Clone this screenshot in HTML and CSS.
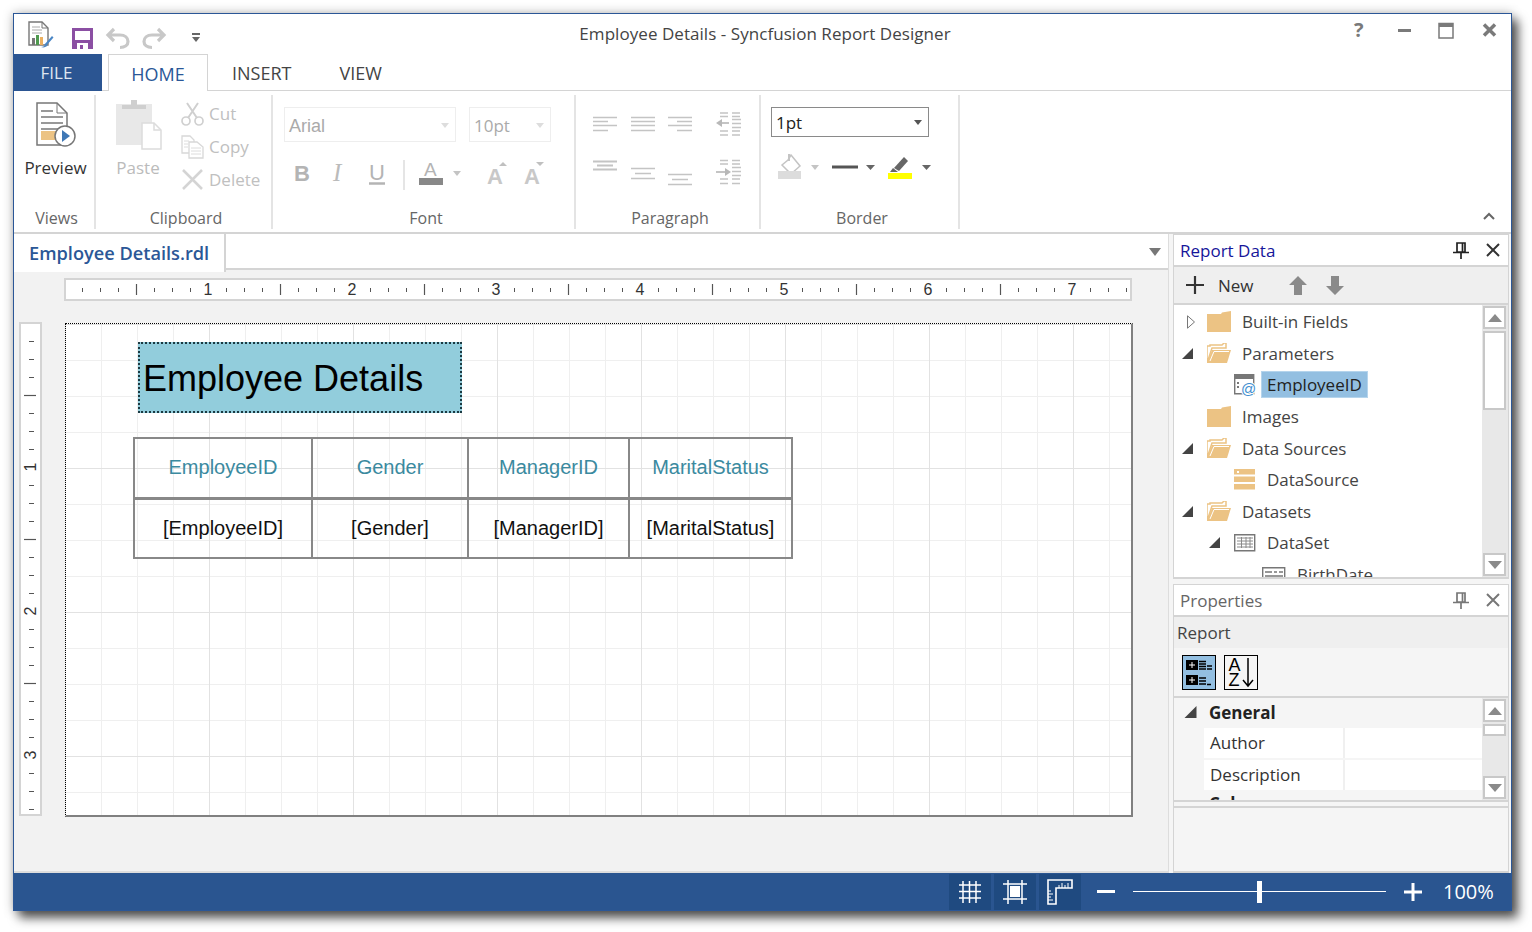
FILE: index.html

```html
<!DOCTYPE html>
<html lang="en">
<head>
  <meta charset="UTF-8">
  <title>Employee Details - Syncfusion Report Designer</title>
  <link rel="stylesheet" href="styles.css">
</head>
<body>

  <svg class="defs" width="0" height="0">
    <defs>
      <symbol id="folder" viewBox="0 0 24 21">
        <path d="M0 3h14l1-1.500 9-1.500V21H0z" fill="#ecc384"/>
      </symbol>
      <symbol id="folder-open" viewBox="0 0 24 20">
        <path d="M0 20V3h3V2h12l2-2h2v5H5z" fill="#fff" stroke="#ecc384" stroke-width="1.500"/>
        <path d="M0 20 5 7h19l-4 13z" fill="#ecc384"/>
        <path d="M3 18 7 8.500h15" fill="none" stroke="#fff"/>
      </symbol>
      <symbol id="twist-open" viewBox="0 0 11 11">
        <path d="M11 0v11H0z" fill="#444"/>
      </symbol>
      <symbol id="twist-closed" viewBox="0 0 8 14">
        <path d="M.5.800 7.500 7 .5 13.200z" fill="#fff" stroke="#777"/>
      </symbol>
      <symbol id="pin" viewBox="0 0 16 18">
        <path d="M4 2h8v9H4zM9.500 2v9M0 11.500h16M8 12v6" fill="none" stroke="currentColor" stroke-width="1.700"/>
      </symbol>
      <symbol id="close" viewBox="0 0 14 14">
        <path d="M1 1 13 13M13 1 1 13" fill="none" stroke="currentColor" stroke-width="2"/>
      </symbol>
      <symbol id="arrow-up" viewBox="0 0 16 10">
        <path d="M8 1 15 9H1z" fill="#8a8a8a"/>
      </symbol>
      <symbol id="arrow-down" viewBox="0 0 16 10">
        <path d="M8 9 15 1H1z" fill="#8a8a8a"/>
      </symbol>
    </defs>
  </svg>

  <div class="window">

    <div class="titlebar">
      <svg class="qat" width="190" height="40" viewBox="0 0 190 40">
        <!-- report icon -->
        <path d="M15 8h13l6 6v17H15z" fill="#fff" stroke="#777" stroke-width="1.400"/>
        <path d="M28 8v6h6" fill="none" stroke="#777"/>
        <path d="M18 13h8M18 16h10M18 19h10" stroke="#aaa"/>
        <path d="M18 24h3v7h-3z" fill="#777"/>
        <path d="M22 21h3v10h-3z" fill="#4f9a4f"/>
        <path d="M26 23h3v8h-3z" fill="#ecb060"/>
        <path d="M30 31 38 22l1.500 1.500-7 8z" fill="#4a86c5"/>
        <path d="M27 33c2 0 4-1 5-3l1.500 1.500c-1 1.500-4 2.500-6.500 1.500z" fill="#4a86c5"/>
        <!-- save -->
        <path d="M58 14h21v21H58z" fill="#8b4fa3"/>
        <path d="M61 17h15v9H61z" fill="#fff"/>
        <path d="M63 29h11v6H63z" fill="#fff"/>
        <path d="M66 31h3v4h-3z" fill="#8b4fa3"/>
        <!-- undo, redo -->
        <path d="M100 15l-6 6 6 6M95 21h11c5 0 8 3 8 6.500s-3 6-8 6" fill="none" stroke="#c8c8c8" stroke-width="3.200"/>
        <path d="M144 15l6 6-6 6M149 21h-11c-5 0-8 3-8 6.500s3 6 8 6" fill="none" stroke="#c8c8c8" stroke-width="3.200"/>
        <!-- customize -->
        <path d="M178 19h8v2h-8z" fill="#666"/>
        <path d="M178 23h8l-4 5z" fill="#666"/>
      </svg>
      <div class="title-text">Employee Details - Syncfusion Report Designer</div>
      <div class="window-controls">
        <span class="win-help">?</span>
        <svg width="150" height="40" viewBox="0 0 150 40">
          <path d="M50 16.500h13" stroke="#7a7a7a" stroke-width="3"/>
          <path d="M91 9.500h14v14.500H91z" fill="#fff" stroke="#7a7a7a" stroke-width="1.500"/>
          <path d="M91 9.500h14v3.500H91z" fill="#7a7a7a"/>
          <path d="M136 10.500l11 11M147 10.500l-11 11" stroke="#7a7a7a" stroke-width="3.500"/>
        </svg>
      </div>
    </div>

    <div class="tabs">
      <div class="tab-file">FILE</div>
      <div class="tab tab-active">HOME</div>
      <div class="tab tab-insert">INSERT</div>
      <div class="tab tab-view">VIEW</div>
    </div>

    <div class="ribbon">

      <div class="group group-views">
        <div class="group-body preview-btn">
          <svg width="40" height="45" viewBox="0 0 40 45">
            <path d="M1 1h20l10 10v32H1z" fill="#fff" stroke="#777" stroke-width="1.500"/>
            <path d="M21 1v10h10" fill="none" stroke="#777"/>
            <path d="M5 9h12M5 15h22M5 21h22M5 27h22" stroke="#999" stroke-width="2"/>
            <path d="M5 29h22v9H5z" fill="#ecc384"/>
            <circle cx="29" cy="34" r="10" fill="#fff" stroke="#777" stroke-width="1.500"/>
            <path d="M26 28l8 6-8 6z" fill="#3f78b5"/>
          </svg>
          <span class="big-label">Preview</span>
        </div>
        <div class="group-label">Views</div>
      </div>

      <div class="group group-clipboard">
        <div class="group-body clipboard-body">
          <div class="paste-btn">
            <svg width="46" height="50" viewBox="0 0 46 50">
              <path d="M0 4h36v41H0z" fill="#e8e8e8"/>
              <path d="M6 5h24v4H6zM15 0h6v5h-6z" fill="#cfcfcf"/>
              <path d="M26 23h12l7 7v19H26z" fill="#fff" stroke="#dcdcdc" stroke-width="1.500"/>
              <path d="M38 23v7h7" fill="none" stroke="#dcdcdc" stroke-width="1.500"/>
            </svg>
            <span class="big-label disabled">Paste</span>
          </div>
          <div class="clip-list">
            <div class="clip-row">
              <svg width="23" height="24" viewBox="0 0 23 24">
                <circle cx="5" cy="19" r="4" fill="none" stroke="#d0d0d0" stroke-width="1.700"/>
                <circle cx="18" cy="19" r="4" fill="none" stroke="#d0d0d0" stroke-width="1.700"/>
                <path d="M7 16 17 1M16 16 6 1" stroke="#d0d0d0" stroke-width="2"/>
              </svg>
              <span>Cut</span>
            </div>
            <div class="clip-row">
              <svg width="23" height="24" viewBox="0 0 23 24">
                <path d="M1 1h8l4 4v13H1z" fill="#fff" stroke="#d8d8d8" stroke-width="1.300"/>
                <path d="M8 7h8l6 5v11H8z" fill="#fff" stroke="#d8d8d8" stroke-width="1.300"/>
                <path d="M3 6h5M3 9h4M3 12h4M10 13h10M10 16h10M10 19h10" stroke="#dcdcdc"/>
              </svg>
              <span>Copy</span>
            </div>
            <div class="clip-row">
              <svg width="23" height="22" viewBox="0 0 23 22">
                <path d="M2 1 21 20M21 1 2 20" stroke="#d4d4d4" stroke-width="2.500"/>
              </svg>
              <span>Delete</span>
            </div>
          </div>
        </div>
        <div class="group-label">Clipboard</div>
      </div>

      <div class="group group-font">
        <div class="group-body">
          <div class="font-selects">
            <div class="select select-disabled select-family"><span class="arial">Arial</span><i class="caret caret-light"></i></div>
            <div class="select select-disabled select-size"><span>10pt</span><i class="caret caret-light"></i></div>
          </div>
          <svg class="font-tools" width="265" height="36" viewBox="284 155 265 36">
            <text class="ico-letter" x="294" y="181" font-weight="bold" fill="#b4b4b4">B</text>
            <text class="ico-letter ico-italic" x="333" y="181" fill="#bbb">I</text>
            <text class="ico-letter" x="369" y="180" fill="#b4b4b4">U</text>
            <path d="M369 183.500h16" stroke="#b4b4b4" stroke-width="2.500"/>
            <path d="M404 160v30" stroke="#dcdcdc" stroke-width="1.500"/>
            <text class="ico-letter ico-small" x="424" y="176" fill="#b4b4b4">A</text>
            <path d="M419 178h24v7h-24z" fill="#888"/>
            <path d="M453 171h8l-4 5z" fill="#c4c4c4"/>
            <text class="ico-letter" x="487" y="184" font-weight="bold" fill="#c8c8c8">A</text>
            <path d="M499 166l4-4 4 4z" fill="#c0c0c0"/>
            <text class="ico-letter" x="524" y="184" font-weight="bold" fill="#c8c8c8">A</text>
            <path d="M536 162h8l-4 4z" fill="#c0c0c0"/>
          </svg>
        </div>
        <div class="group-label">Font</div>
      </div>

      <div class="group group-paragraph">
        <div class="group-body">
          <svg width="184" height="112" viewBox="576 95 184 112">
            <g stroke="#c4c4c4" stroke-width="1.500" fill="none">
              <path d="M593 117.500h24M593 121.500h15M593 125.500h24M593 130.500h15"/>
              <path d="M631 117.500h24M631 121.500h24M631 125.500h24M631 130.500h24"/>
              <path d="M668 117.500h24M677 121.500h15M668 125.500h24M677 130.500h15"/>
              <path d="M593 161.500h24M597 165.500h16M593 169.500h24" stroke-width="2"/>
              <path d="M631 168.500h24M635 173.500h16M631 178.500h24"/>
              <path d="M668 174.500h24M672 179.500h16M668 184.500h24"/>
              <path d="M720 113h21M720 116.500h21M720 131h21M720 135h21" stroke-dasharray="8 4"/>
              <path d="M732 119.500h9M732 123.500h9M732 127.500h9"/>
              <path d="M720 160.500h21M720 164h21M720 179h21M720 183.500h21" stroke-dasharray="8 4"/>
              <path d="M732 167.500h9M732 171.500h9M732 175.500h9"/>
              <path d="M719 123h10M716 172h9" stroke-width="2"/>
            </g>
            <path d="M716 123l6-4v8zM731 172l-6-4v8z" fill="#b8b8b8"/>
          </svg>
        </div>
        <div class="group-label">Paragraph</div>
      </div>

      <div class="group group-border">
        <div class="group-body">
          <div class="select select-weight"><span>1pt</span><i class="caret"></i></div>
          <svg class="border-tools" width="170" height="30" viewBox="771 153 170 30">
            <path d="M791 155l9 11-9 8-9-9 6-5z" fill="#fff" stroke="#c4c4c4" stroke-width="1.500"/>
            <path d="M789 154v7" stroke="#c4c4c4" stroke-width="2"/>
            <path d="M778 171h23v8h-23z" fill="#dcdcdc"/>
            <path d="M811 165h8l-4 5z" fill="#c4c4c4"/>
            <path d="M832 165.500h26v3h-26z" fill="#555"/>
            <path d="M866 165h9l-4.500 5z" fill="#666"/>
            <path d="M894 168l10-11 4 4-9 10z" fill="#666"/>
            <path d="M890 172l3-4 5 4z" fill="#666"/>
            <path d="M888 173h24v6h-24z" fill="#ffff00"/>
            <path d="M922 165h9l-4.500 5z" fill="#666"/>
          </svg>
        </div>
        <div class="group-label">Border</div>
      </div>

      <svg class="ribbon-collapse" width="12" height="8" viewBox="0 0 12 8">
        <path d="M1 7l5-5 5 5" fill="none" stroke="#666" stroke-width="2"/>
      </svg>
    </div>

    <div class="main">

      <div class="designer">
        <div class="doc-tabs">
          <div class="doc-tab">Employee Details.rdl</div>
          <div class="doc-rest">
            <svg width="12" height="8" viewBox="0 0 12 8"><path d="M0 0h12L6 8z" fill="#777"/></svg>
          </div>
        </div>

        <svg class="ruler-h" width="1068" height="23" viewBox="64 278 1068 23">
          <defs>
            <pattern id="htick" x="64" y="278" width="144" height="23" patternUnits="userSpaceOnUse">
              <path d="M18.500 10v4M36.500 10v4M54.500 10v4M90.500 10v4M108.500 10v4M126.500 10v4" stroke="#555"/>
              <path d="M72.500 6v11" stroke="#555" stroke-width="1.200"/>
            </pattern>
          </defs>
          <rect x="65" y="279" width="1066" height="21" fill="#fff" stroke="#d4d4d4" stroke-width="2"/>
          <rect x="66" y="280" width="1064" height="19" fill="url(#htick)"/>
          <g class="ruler-num" text-anchor="middle">
            <text x="208" y="295">1</text>
            <text x="352" y="295">2</text>
            <text x="496" y="295">3</text>
            <text x="640" y="295">4</text>
            <text x="784" y="295">5</text>
            <text x="928" y="295">6</text>
            <text x="1072" y="295">7</text>
          </g>
        </svg>

        <div class="work">
          <svg class="ruler-v" width="23" height="494" viewBox="19 322 23 494">
            <defs>
              <pattern id="vtick" x="19" y="323" width="23" height="144" patternUnits="userSpaceOnUse">
                <path d="M10 18.500h5M10 36.500h5M10 54.500h5M10 90.500h5M10 108.500h5M10 126.500h5" stroke="#555"/>
                <path d="M5 72.500h12" stroke="#555" stroke-width="1.200"/>
              </pattern>
            </defs>
            <rect x="20" y="323" width="21" height="492" fill="#fff" stroke="#d4d4d4" stroke-width="2"/>
            <rect x="21" y="324" width="19" height="490" fill="url(#vtick)"/>
            <g class="ruler-num" text-anchor="middle">
              <text transform="translate(36 467) rotate(-90)">1</text>
              <text transform="translate(36 611) rotate(-90)">2</text>
              <text transform="translate(36 755) rotate(-90)">3</text>
            </g>
          </svg>

          <div class="canvas">
            <div class="report-title">Employee Details</div>
            <table class="report-table">
              <colgroup>
                <col class="col-a"><col class="col-b"><col class="col-c"><col class="col-d">
              </colgroup>
              <tr>
                <th>EmployeeID</th><th>Gender</th><th>ManagerID</th><th>MaritalStatus</th>
              </tr>
              <tr>
                <td>[EmployeeID]</td><td>[Gender]</td><td>[ManagerID]</td><td>[MaritalStatus]</td>
              </tr>
            </table>
          </div>
        </div>
      </div>

      <div class="side">

        <div class="panel panel-data">
          <div class="panel-head">
            <span class="panel-title panel-title-active">Report Data</span>
            <svg class="pin" width="16" height="18"><use href="#pin"/></svg>
            <svg class="close" width="14" height="14"><use href="#close"/></svg>
          </div>
          <div class="data-toolbar">
            <svg width="18" height="18" viewBox="0 0 18 18"><path d="M9 0v18M0 9h18" stroke="#333" stroke-width="2.200"/></svg>
            <span class="new-label">New</span>
            <svg class="tool-up" width="18" height="19" viewBox="0 0 18 19"><path d="M9 0l9 9h-5v10H5V9H0z" fill="#8a8a8a"/></svg>
            <svg class="tool-down" width="18" height="19" viewBox="0 0 18 19"><path d="M9 19 0 10h5V0h8v10h5z" fill="#8a8a8a"/></svg>
          </div>
          <div class="tree-wrap">
            <div class="tree">
              <div class="tree-row lvl0">
                <span class="twist"><svg class="tw-closed" width="8" height="14"><use href="#twist-closed"/></svg></span>
                <svg class="tree-icon" width="24" height="21"><use href="#folder"/></svg>
                <span class="tree-label">Built-in Fields</span>
              </div>
              <div class="tree-row lvl0">
                <span class="twist"><svg width="11" height="11"><use href="#twist-open"/></svg></span>
                <svg class="tree-icon" width="24" height="20"><use href="#folder-open"/></svg>
                <span class="tree-label">Parameters</span>
              </div>
              <div class="tree-row lvl1">
                <span class="twist"></span>
                <svg class="tree-icon" width="22" height="22" viewBox="0 0 22 22">
                  <path d="M.7.700h19v19H.7z" fill="#fff" stroke="#777" stroke-width="1.400"/>
                  <path d="M0 0h20v5H0z" fill="#777"/>
                  <path d="M3 8h2v2H3zM3 12h2v2H3z" fill="#777"/>
                  <text class="param-at" x="7" y="20">@</text>
                </svg>
                <span class="tree-label tree-selected">EmployeeID</span>
              </div>
              <div class="tree-row lvl0">
                <span class="twist"></span>
                <svg class="tree-icon" width="24" height="21"><use href="#folder"/></svg>
                <span class="tree-label">Images</span>
              </div>
              <div class="tree-row lvl0">
                <span class="twist"><svg width="11" height="11"><use href="#twist-open"/></svg></span>
                <svg class="tree-icon" width="24" height="20"><use href="#folder-open"/></svg>
                <span class="tree-label">Data Sources</span>
              </div>
              <div class="tree-row lvl1">
                <span class="twist"></span>
                <svg class="tree-icon" width="22" height="21" viewBox="0 0 22 21">
                  <path d="M0 0h21v5.500H0zM0 7.500h21v5.500H0zM0 15h21v5.500H0z" fill="#ecc384"/>
                  <path d="M3 2h2v2H3z" fill="#fff"/>
                </svg>
                <span class="tree-label">DataSource</span>
              </div>
              <div class="tree-row lvl0">
                <span class="twist"><svg width="11" height="11"><use href="#twist-open"/></svg></span>
                <svg class="tree-icon" width="24" height="20"><use href="#folder-open"/></svg>
                <span class="tree-label">Datasets</span>
              </div>
              <div class="tree-row lvl1">
                <span class="twist"><svg width="11" height="11"><use href="#twist-open"/></svg></span>
                <svg class="tree-icon" width="22" height="18" viewBox="0 0 22 18">
                  <path d="M.7.700h20v16h-20z" fill="#fff" stroke="#777" stroke-width="1.400"/>
                  <path d="M3 4h16M3 7h16M3 10h16M3 13h16M7.500 3v11M12 3v11M16 3v11" stroke="#8a8a8a"/>
                </svg>
                <span class="tree-label">DataSet</span>
              </div>
              <div class="tree-row lvl2">
                <span class="twist"></span>
                <svg class="tree-icon" width="24" height="16" viewBox="0 0 24 16">
                  <path d="M.7.700h22v14h-22z" fill="#fff" stroke="#777" stroke-width="1.400"/>
                  <path d="M3 5h7M12 5h3M17 5h4M3 9h18" stroke="#777" stroke-width="1.500"/>
                </svg>
                <span class="tree-label">BirthDate</span>
              </div>
            </div>
            <div class="scrollbar">
              <div class="sb-btn"><svg width="16" height="10"><use href="#arrow-up"/></svg></div>
              <div class="sb-thumb sb-thumb-tree"></div>
              <div class="sb-space"></div>
              <div class="sb-btn"><svg width="16" height="10"><use href="#arrow-down"/></svg></div>
            </div>
          </div>
        </div>

        <div class="panel panel-props">
          <div class="panel-head">
            <span class="panel-title">Properties</span>
            <svg class="pin pin-muted" width="16" height="18"><use href="#pin"/></svg>
            <svg class="close close-muted" width="14" height="14"><use href="#close"/></svg>
          </div>
          <div class="props-object">Report</div>
          <div class="props-sort">
            <div class="sort-btn sort-on">
              <svg width="26" height="28" viewBox="0 0 26 28">
                <path d="M0 1h12v10H0zM0 16h12v10H0z" fill="#000"/>
                <path d="M3 6h6M6 3v6M3 21h6M6 18v6" stroke="#fff"/>
                <path d="M13 2.500h7M13 5h7M13 7.500h7M13 10h7M21 7h5M21 10h5M13 19h7M13 22h7M13 25h7M21 25.500h4" stroke="#000" stroke-width="1.500"/>
              </svg>
            </div>
            <div class="sort-btn">
              <span class="az">A<br>Z</span>
              <svg width="12" height="30" viewBox="0 0 12 30"><path d="M6 0v28M1 22l5 6 5-6" fill="none" stroke="#000" stroke-width="1.500"/></svg>
            </div>
          </div>
          <div class="props-wrap">
            <div class="props-list">
              <div class="prop-cat">
                <svg width="13" height="12" viewBox="0 0 11 11"><path d="M11 0v11H0z" fill="#444"/></svg>
                <span>General</span>
              </div>
              <div class="prop-row"><span class="prop-name">Author</span><span class="prop-value"></span></div>
              <div class="prop-row"><span class="prop-name">Description</span><span class="prop-value"></span></div>
              <div class="prop-cat prop-cat-cut"><span>Colors</span></div>
            </div>
            <div class="scrollbar scrollbar-props">
              <div class="sb-btn"><svg width="16" height="10"><use href="#arrow-up"/></svg></div>
              <div class="sb-thumb sb-thumb-props"></div>
              <div class="sb-space"></div>
              <div class="sb-btn"><svg width="16" height="10"><use href="#arrow-down"/></svg></div>
            </div>
          </div>
          <div class="props-desc"></div>
        </div>
      </div>
    </div>

    <div class="statusbar">
      <div class="status-btn">
        <svg width="24" height="24" viewBox="0 0 24 24">
          <path d="M5 1v22M11.500 1v22M18 1v22M1 5h22M1 11.500h22M1 18h22" stroke="#fff" stroke-width="1.500"/>
        </svg>
      </div>
      <div class="status-btn">
        <svg width="24" height="26" viewBox="0 0 24 26">
          <path d="M5 1v24M19 1v24M0 5h24M0 20h24" stroke="#fff" stroke-width="1.500"/>
          <path d="M7 7h10v11H7z" fill="#fff"/>
        </svg>
      </div>
      <div class="status-btn">
        <svg width="26" height="26" viewBox="0 0 26 26">
          <path d="M1 1h24v8H9v16H1z" fill="none" stroke="#fff" stroke-width="1.600"/>
          <path d="M12 9V6M15 9V4M18 9V6M21 9V4M1 12h3M1 15h5M1 18h3M1 21h5" stroke="#fff"/>
        </svg>
      </div>
      <div class="zoom-minus"></div>
      <div class="zoom-track"><div class="zoom-thumb"></div></div>
      <svg class="zoom-plus" width="18" height="18" viewBox="0 0 18 18"><path d="M9 0v18M0 9h18" stroke="#fff" stroke-width="3"/></svg>
      <div class="zoom-value">100%</div>
    </div>

  </div>

</body>
</html>
```

FILE: styles.css

```css
* {
  box-sizing: border-box;
}
html, body {
  height: 932px;
}
body {
  margin: 0;
  padding: 13px 0 0 13px;
  overflow: hidden;
  background: #fff;
  font-family: "Open Sans", sans-serif;
  color: #444;
}
svg {
  display: block;
  flex: none;
}
.defs {
  position: absolute;
}
.window {
  display: flex;
  flex-direction: column;
  width: 1499px;
  height: 898px;
  background: #fff;
  border: 1px solid #2b5797;
  box-shadow: 6px 7px 10px rgba(0,0,0,0.65), 0 0 10px rgba(0,0,0,0.25);
}

/* title bar */
.titlebar {
  display: flex;
  height: 40px;
  background: #fff;
}
.title-text {
  flex: 1;
  text-align: center;
  font-size: 17px;
  letter-spacing: 0.05px;
  line-height: 40px;
  color: #444;
}
.window-controls {
  display: flex;
  width: 185px;
  justify-content: flex-end;
  padding-right: 13px;
  position: relative;
}
.win-help {
  position: absolute;
  left: 28px;
  top: 3px;
  font-size: 20px;
  font-weight: bold;
  line-height: 26px;
  color: #7a7a7a;
}

/* tabs */
.tabs {
  display: flex;
  height: 37px;
  border-bottom: 1px solid #d4d4d4;
  font-size: 18px;
}
.tab-file {
  width: 88px;
  height: 37px;
  padding-right: 3px;
  background: #2b5592;
  color: #dfe6f0;
  font-size: 17px;
  text-align: center;
  line-height: 38px;
}
.tab {
  line-height: 38px;
  color: #444;
}
.tab-active {
  width: 100px;
  height: 37px;
  margin-left: 6px;
  text-align: center;
  color: #2b5797;
  background: #fff;
  border: 1px solid #d4d4d4;
  border-bottom: none;
}
.tab-insert {
  margin-left: 24px;
}
.tab-view {
  margin-left: 48px;
}

/* ribbon */
.ribbon {
  display: flex;
  height: 143px;
  padding: 4px 0 3px;
  border-bottom: 2px solid #d4d4d4;
  position: relative;
}
.group {
  display: flex;
  flex-direction: column;
  border-right: 2px solid #e4e4e4;
}
.group-views { width: 82px; }
.group-clipboard { width: 177px; }
.group-font { width: 303px; }
.group-paragraph { width: 185px; }
.group-border { width: 199px; }
.group-body {
  flex: 1;
}
.group-label {
  height: 22px;
  padding-left: 5px;
  line-height: 22px;
  text-align: center;
  font-size: 16px;
  color: #666;
}
.preview-btn {
  display: flex;
  flex-direction: column;
  align-items: center;
  padding: 7px 0 0 3px;
}
.big-label {
  display: block;
  margin-top: 10px;
  font-size: 17px;
  line-height: 22px;
  color: #333;
}
.big-label.disabled {
  margin: 7px 0 0 -2px;
  color: #bbb;
  text-align: center;
}
.clipboard-body {
  display: flex;
  padding-left: 20px;
}
.paste-btn {
  width: 46px;
  padding-top: 5px;
}
.clip-list {
  margin-left: 19px;
  padding-top: 2px;
}
.clip-row {
  display: flex;
  align-items: center;
  gap: 5px;
  height: 33px;
  font-size: 17px;
  color: #c0c0c0;
}
.font-selects {
  display: flex;
  gap: 13px;
  padding: 12px 0 0 11px;
}
.select {
  display: flex;
  align-items: center;
  justify-content: space-between;
  padding: 0 4px;
  font-size: 17px;
  color: #222;
  border: 1px solid #8a8a8a;
}
.select-disabled {
  height: 35px;
  padding-top: 2px;
  color: #aaa;
  border: 1px solid #eee;
}
.select-family { width: 172px; }
.select-size { width: 82px; }
.arial {
  padding-top: 2px;
  font-family: "Liberation Sans", sans-serif;
  font-size: 18px;
}
.caret {
  width: 0;
  height: 0;
  margin-right: 2px;
  border: 4px solid transparent;
  border-top: 5px solid #555;
  border-bottom: none;
}
.caret-light {
  border-top-color: #ddd;
}
.font-tools {
  margin: 13px 0 0 11px;
}
.ico-letter {
  font-family: "Liberation Sans", sans-serif;
  font-size: 22px;
}
.ico-italic {
  font-family: "Liberation Serif", serif;
  font-style: italic;
  font-size: 25px;
}
.ico-small {
  font-size: 19px;
}
.param-at {
  font-family: "Liberation Sans", sans-serif;
  font-size: 15px;
  fill: #3f8ed0;
  paint-order: stroke;
  stroke: #fff;
  stroke-width: 2px;
}
.select-weight {
  width: 158px;
  height: 30px;
  margin: 12px 0 0 10px;
}
.border-tools {
  margin: 16px 0 0 10px;
}
.ribbon-collapse {
  position: absolute;
  left: 1469px;
  top: 121px;
}

/* designer */
.main {
  display: flex;
  flex: 1;
  min-height: 0;
  background: #f5f5f5;
}
.designer {
  width: 1155px;
  background: #f2f2f2;
  border-right: 1px solid #ddd;
  border-bottom: 2px solid #ddd;
}
.doc-tabs {
  display: flex;
  height: 38px;
  align-items: flex-start;
}
.doc-tab {
  width: 212px;
  height: 38px;
  padding-left: 15px;
  background: #fff;
  border-right: 2px solid #d4d4d4;
  font-size: 18.2px;
  font-weight: 600;
  line-height: 38px;
  color: #2b5797;
}
.doc-rest {
  display: flex;
  flex: 1;
  height: 36px;
  align-items: center;
  justify-content: flex-end;
  padding: 2px 7px 0 0;
  background: #fff;
  border-bottom: 2px solid #d4d4d4;
}
.ruler-h {
  margin: 6px 0 0 50px;
}
.ruler-num {
  font-family: "Liberation Sans", sans-serif;
  font-size: 16px;
  fill: #333;
}
.work {
  display: flex;
  padding: 21px 0 0 5px;
}
.ruler-v {
  margin-right: 23px;
}
.canvas {
  width: 1068px;
  height: 494px;
  margin-top: 1px;
  padding: 18px 0 0 72px;
  border-top: 1px dotted #000;
  border-left: 1px dotted #000;
  border-right: 2px solid #808080;
  border-bottom: 2px solid #808080;
  background-color: #fff;
  background-image:
    linear-gradient(to right, transparent 143px, #e2e2e2 143px),
    linear-gradient(to bottom, transparent 143px, #e2e2e2 143px),
    linear-gradient(to right, transparent 35px, #efefef 35px),
    linear-gradient(to bottom, transparent 35px, #efefef 35px);
  background-size: 144px 144px, 144px 144px, 36px 36px, 36px 36px;
  background-position: 0 1px;
}
.report-title {
  width: 324px;
  height: 71px;
  padding-left: 3px;
  background: #92cddc;
  border: 2px dotted #1b3a42;
  font-family: "Liberation Sans", sans-serif;
  font-size: 36px;
  line-height: 70px;
  color: #000;
}
.report-table {
  width: 658px;
  margin: 24px 0 0 -5px;
  border-collapse: collapse;
  table-layout: fixed;
  font-family: "Liberation Sans", sans-serif;
  font-size: 20px;
}
.col-a { width: 178px; }
.col-b { width: 156px; }
.col-c { width: 161px; }
.col-d { width: 163px; }
.report-table th,
.report-table td {
  height: 60px;
  padding: 0;
  border: 2px solid #888;
  text-align: center;
  font-weight: normal;
}
.report-table th {
  color: #3b8a9f;
  border-bottom-width: 3px;
}
.report-table td {
  color: #111;
}

/* side panels */
.side {
  display: flex;
  flex-direction: column;
  width: 338px;
  margin-left: 4px;
  padding-right: 2px;
}
.panel {
  border: 1px solid #d4d4d4;
  border-bottom: none;
}
.panel-data {
  height: 345px;
  background: #fff;
  border-bottom: 2px solid #d4d4d4;
}
.panel-props {
  flex: 1;
  margin-top: 5px;
  border-bottom: 2px solid #d4d4d4;
  background: #f5f5f5;
}
.panel-head {
  display: flex;
  align-items: center;
  height: 32px;
  padding: 0 8px 0 6px;
  background: #fff;
  border-bottom: 2px solid #d4d4d4;
}
.panel-title {
  flex: 1;
  font-size: 17px;
  color: #666;
}
.panel-title-active {
  color: #16169a;
}
.pin {
  color: #222;
  margin-right: 17px;
}
.close {
  color: #333;
}
.pin-muted {
  color: #777;
}
.close-muted {
  color: #777;
}
.data-toolbar {
  display: flex;
  align-items: center;
  height: 38px;
  padding-left: 12px;
  background: #efefef;
  border-bottom: 2px solid #d4d4d4;
}
.new-label {
  margin-left: 14px;
  font-size: 17px;
  color: #333;
}
.tool-up {
  margin-left: 35px;
}
.tool-down {
  margin-left: 19px;
}
.tree-wrap {
  display: flex;
  height: 272px;
}
.tree {
  flex: 1;
  overflow: hidden;
  padding-top: 1px;
}
.tree-row {
  display: flex;
  align-items: center;
  height: 31.6px;
  font-size: 17px;
  color: #444;
  white-space: nowrap;
}
.lvl0 { padding-left: 8px; }
.lvl1 { padding-left: 35px; }
.lvl2 { padding-left: 63px; }
.twist {
  display: flex;
  width: 25px;
}
.tw-closed {
  margin-left: 5px;
}
.tree-label {
  margin-left: 11px;
}
.tree-selected {
  margin-left: 5px;
  padding: 0 5px;
  line-height: 25px;
  background: #93bfe1;
  border: 1px solid #b5d4ec;
  color: #222;
}
.scrollbar {
  display: flex;
  flex-direction: column;
  flex: none;
  width: 26px;
  padding: 1px 2px 1px 1px;
  background: #e8e8e8;
  gap: 2px;
}
.sb-btn {
  display: flex;
  align-items: center;
  justify-content: center;
  height: 23px;
  background: #fff;
  border: 2px solid #c8c8c8;
}
.sb-thumb {
  background: #fff;
  border: 2px solid #c8c8c8;
}
.sb-thumb-tree { height: 79px; }
.sb-thumb-props { height: 12px; }
.sb-space { flex: 1; }

.props-object {
  height: 31px;
  padding-left: 3px;
  background: #efefef;
  font-size: 17px;
  line-height: 31px;
  color: #444;
}
.props-sort {
  display: flex;
  gap: 8px;
  height: 50px;
  padding: 7px 0 0 8px;
  border-bottom: 2px solid #d4d4d4;
}
.sort-btn {
  display: flex;
  align-items: center;
  justify-content: center;
  gap: 1px;
  width: 34px;
  height: 35px;
  background: #f5f5f5;
  border: 1px solid #000;
}
.sort-on {
  background: #93bfe1;
}
.az {
  font-family: "Liberation Sans", sans-serif;
  font-size: 18px;
  line-height: 15px;
  color: #000;
}
.props-wrap {
  display: flex;
  height: 104px;
  border-bottom: 2px solid #d4d4d4;
}
.props-list {
  flex: 1;
  overflow: hidden;
}
.prop-cat {
  display: flex;
  align-items: center;
  height: 30px;
  padding: 0 0 2px 10px;
  font-size: 17px;
  font-weight: bold;
  color: #222;
}
.prop-cat span {
  margin-left: 12px;
}
.prop-cat-cut {
  height: 30px;
  padding-left: 23px;
  align-items: flex-start;
}
.prop-cat-cut span {
  margin-left: 12px;
}
.prop-row {
  display: flex;
  height: 30px;
  margin: 0 0 2px 30px;
  background: #fff;
  font-size: 17px;
  line-height: 30px;
  color: #333;
}
.prop-name {
  width: 141px;
  padding-left: 6px;
  border-right: 2px solid #f0f0f0;
}
.scrollbar-props {
  background: #e8e8e8;
}
.props-desc {
  height: 64px;
  margin-top: 4px;
  border-top: 2px solid #d4d4d4;
}

/* status bar */
.statusbar {
  display: flex;
  align-items: center;
  height: 37px;
  padding-left: 935px;
  background: #2a5590;
  color: #fff;
}
.status-btn {
  display: flex;
  align-items: center;
  justify-content: center;
  width: 42px;
  height: 36px;
  margin-right: 3px;
  background: #1f4a80;
}
.zoom-minus {
  width: 18px;
  height: 3px;
  margin-left: 13px;
  background: #fff;
}
.zoom-track {
  display: flex;
  align-items: center;
  width: 253px;
  height: 1px;
  margin-left: 18px;
  padding-left: 124px;
  background: #fff;
}
.zoom-thumb {
  width: 5px;
  height: 22px;
  background: #fff;
}
.zoom-plus {
  margin-left: 18px;
}
.zoom-value {
  margin-left: 21px;
  font-size: 20px;
}
```
